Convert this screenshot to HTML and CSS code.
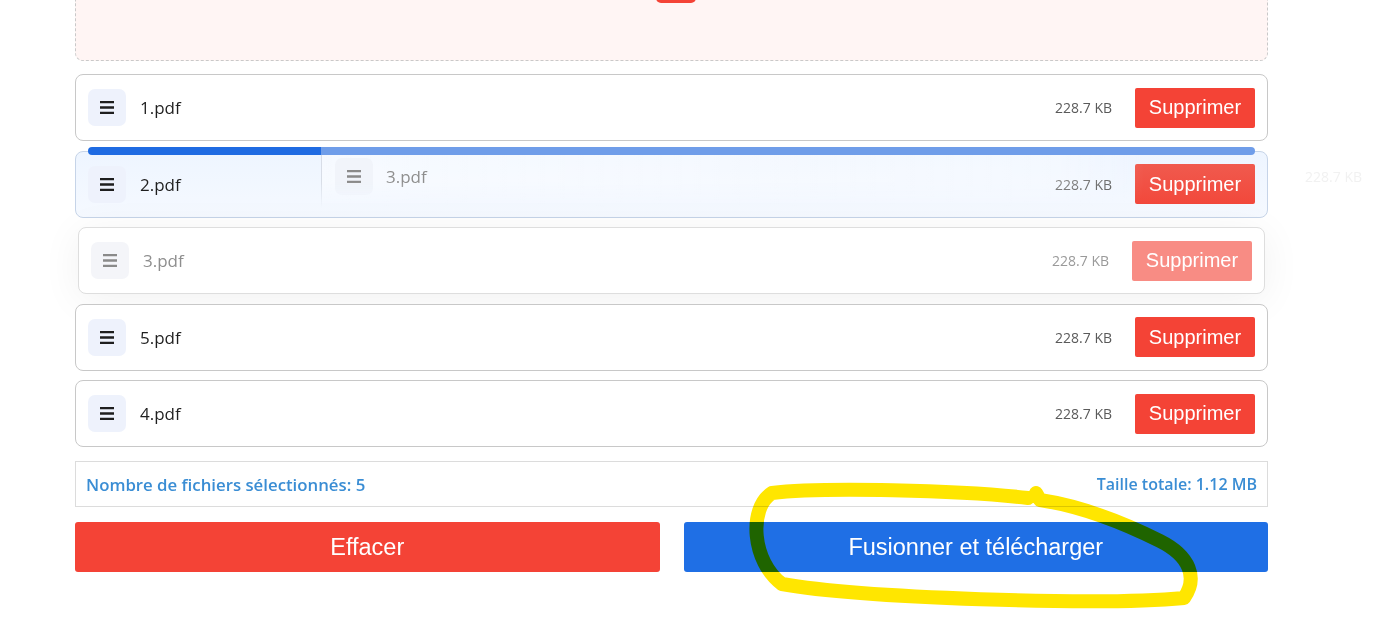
FILE: index.html
```html
<!DOCTYPE html>
<html lang="fr">
<head>
  <meta charset="UTF-8">
  <meta name="viewport" content="width=device-width, initial-scale=1.0">
  <title>Fusionner des PDF</title>
  <link rel="stylesheet" href="styles.css">
</head>
<body>
  <div class="wrap">
    <!-- zone de dépôt (scrollée hors de la vue) -->
    <div class="dropzone">
      <button class="pick"></button>
    </div>

    <ul class="files">
      <li class="file">
        <span class="handle"><svg width="14" height="13" viewBox="0 0 14 13"><path d="M0 1.2h14M0 6.5h14M0 11.8h14" stroke="currentColor" stroke-width="2.3"/></svg></span>
        <span class="name">1.pdf</span>
        <span class="size">228.7 KB</span>
        <button class="del">Supprimer</button>
      </li>
      <li class="file over">
        <span class="drop-bar"></span>
        <span class="handle"><svg width="14" height="13" viewBox="0 0 14 13"><path d="M0 1.2h14M0 6.5h14M0 11.8h14" stroke="currentColor" stroke-width="2.3"/></svg></span>
        <span class="name">2.pdf</span>
        <span class="size">228.7 KB</span>
        <button class="del">Supprimer</button>
      </li>
      <li class="file dragging">
        <span class="handle"><svg width="14" height="13" viewBox="0 0 14 13"><path d="M0 1.2h14M0 6.5h14M0 11.8h14" stroke="currentColor" stroke-width="2.3"/></svg></span>
        <span class="name">3.pdf</span>
        <span class="size">228.7 KB</span>
        <button class="del">Supprimer</button>
      </li>
      <li class="file">
        <span class="handle"><svg width="14" height="13" viewBox="0 0 14 13"><path d="M0 1.2h14M0 6.5h14M0 11.8h14" stroke="currentColor" stroke-width="2.3"/></svg></span>
        <span class="name">5.pdf</span>
        <span class="size">228.7 KB</span>
        <button class="del">Supprimer</button>
      </li>
      <li class="file">
        <span class="handle"><svg width="14" height="13" viewBox="0 0 14 13"><path d="M0 1.2h14M0 6.5h14M0 11.8h14" stroke="currentColor" stroke-width="2.3"/></svg></span>
        <span class="name">4.pdf</span>
        <span class="size">228.7 KB</span>
        <button class="del">Supprimer</button>
      </li>
    </ul>

    <div class="summary">
      <span class="count">Nombre de fichiers sélectionnés: 5</span>
      <span>Taille totale: 1.12 MB</span>
    </div>

    <div class="actions">
      <button class="btn clear">Effacer</button>
      <button class="btn merge">Fusionner et télécharger</button>
    </div>
  </div>

  <!-- image de glisser (drag ghost) -->
  <div class="ghost">
    <span class="handle"><svg width="14" height="13" viewBox="0 0 14 13"><path d="M0 1.2h14M0 6.5h14M0 11.8h14" stroke="currentColor" stroke-width="2.3"/></svg></span>
    <span class="name">3.pdf</span>
    <span class="size">228.7 KB</span>
  </div>

  <!-- annotation au surligneur -->
  <svg class="scribble" width="1377" height="624" viewBox="0 0 1377 624">
    <path d="M1028 498 C960 490 820 487 772 493 C748 508 752 562 782 584 C860 598 1100 606 1184 598 C1198 578 1190 556 1160 541 C1120 521 1080 506 1040 500 L1036 493"
      fill="none" stroke="#ffe600" stroke-width="14" stroke-linecap="round" stroke-linejoin="round"/>
  </svg>
</body>
</html>
```

FILE: styles.css
```css
* {
  box-sizing: border-box;
}

body {
  margin: 0;
  background: #fff;
  position: relative;
  height: 624px;
  overflow: hidden;
  font-family: "Open Sans", "Noto Sans", sans-serif;
}

.wrap {
  margin-left: 75px;
  width: 1193px;
}

.dropzone {
  margin-top: -100px;
  height: 161px;
  background: #fff5f4;
  border: 1px dashed #c9c9c9;
  border-radius: 8px;
  display: flex;
  justify-content: center;
  padding-top: 61px;
  padding-left: 9px;
}

.pick {
  width: 40px;
  height: 41px;
  border: none;
  border-radius: 5px;
  background: #f44336;
}

.files {
  list-style: none;
  margin: 13px 0 0;
  padding: 0;
}

.file {
  position: relative;
  display: flex;
  align-items: center;
  height: 67px;
  margin-bottom: 9.5px;
  padding: 0 12px;
  background: #fff;
  border: 1px solid #c8c8c8;
  border-radius: 8px;
}

.file:last-child {
  margin-bottom: 0;
}

.handle {
  width: 38px;
  height: 37px;
  border-radius: 7px;
  background: #eef2fc;
  color: #1e1e1e;
  display: flex;
  align-items: center;
  justify-content: center;
  flex-shrink: 0;
}

.name {
  margin-left: 14px;
  font-size: 17px;
  color: #1f1f1f;
  flex: 1;
}

.size {
  font-size: 14px;
  color: #5a5a5a;
  margin-right: 23px;
}

.del {
  width: 120px;
  height: 40px;
  border: none;
  border-radius: 2px;
  background: #f44336;
  color: #fff;
  font-family: "Liberation Sans", Arial, sans-serif;
  font-size: 20px;
  padding: 0;
}

/* cible du dépôt */
.file.over {
  background: linear-gradient(to bottom, #eef5ff, #f5f9ff);
  border-color: #c6d4e8;
}

.file.over .del {
  background: linear-gradient(to bottom, #f05a4e, #f2483b);
}

.drop-bar {
  position: absolute;
  top: -5px;
  left: 12px;
  right: 12px;
  height: 8px;
  border-radius: 4px;
  background: linear-gradient(to right, #1f6be2 233px, #6f9de9 233px);
}

/* élément en cours de glissement */
.file.dragging {
  margin-left: 3px;
  margin-right: 3px;
  border-color: #dedede;
  box-shadow: 0 6px 40px rgba(0, 0, 0, 0.06);
}

.file.dragging .handle {
  background: #f4f5f9;
  color: #8a8a8a;
}

.file.dragging .name {
  color: #8e8e8e;
}

.file.dragging .size {
  color: #9a9a9a;
}

.file.dragging .del {
  background: #f88c84;
}

.summary {
  margin-top: 14px;
  height: 46px;
  border: 1px solid #dcdcdc;
  display: flex;
  align-items: center;
  justify-content: space-between;
  padding: 0 10px;
  font-size: 16px;
  font-weight: 600;
  color: #3a8dd4;
}

.summary .count {
  font-size: 16.8px;
}

.actions {
  margin-top: 15px;
  display: flex;
  gap: 24px;
}

.btn {
  flex: 1;
  height: 50px;
  border: none;
  border-radius: 3px;
  color: #fff;
  font-family: "Liberation Sans", Arial, sans-serif;
  font-size: 23.5px;
  padding: 0;
}

.clear {
  background: #f44336;
}

.merge {
  background: #1f6fe5;
}

.ghost {
  position: absolute;
  left: 321px;
  top: 155px;
  width: 1056px;
  height: 53px;
  display: flex;
  align-items: center;
  padding: 0 13px;
  background: linear-gradient(to right, rgba(255, 255, 255, 0.45), rgba(255, 255, 255, 0.3) 70%, rgba(255, 255, 255, 0) 78%);
  border-left: 1px solid rgba(200, 205, 215, 0.6);
  -webkit-mask-image: linear-gradient(to bottom, #000 50%, transparent);
  mask-image: linear-gradient(to bottom, #000 50%, transparent);
}

.ghost .handle {
  background: rgba(240, 243, 250, 0.9);
  color: #8a8a8a;
  margin-top: -10px;
}

.ghost .name {
  color: #8e8e8e;
  margin-left: 13px;
  margin-top: -11px;
}

.ghost .size {
  color: rgba(200, 200, 200, 0.25);
  margin-right: 2px;
  margin-top: -11px;
}

.scribble {
  position: absolute;
  left: 0;
  top: 0;
  pointer-events: none;
  mix-blend-mode: multiply;
}
```
